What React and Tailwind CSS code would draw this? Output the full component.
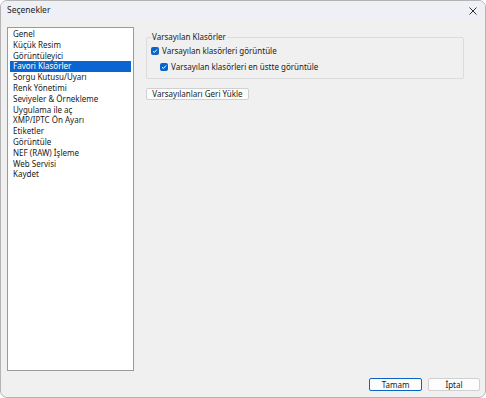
import React from "react";

const items = [
  "Genel",
  "Küçük Resim",
  "Görüntüleyici",
  "Favori Klasörler",
  "Sorgu Kutusu/Uyarı",
  "Renk Yönetimi",
  "Seviyeler & Örnekleme",
  "Uygulama ile aç",
  "XMP/IPTC Ön Ayarı",
  "Etiketler",
  "Görüntüle",
  "NEF (RAW) İşleme",
  "Web Servisi",
  "Kaydet",
];

function Check() {
  return (
    <span className="flex w-[8px] h-[8px] rounded-[2px] bg-[#0a64c8] items-center justify-center shrink-0">
      <svg width="6" height="6" viewBox="0 0 6 6">
        <path d="M1 3.2 L2.4 4.5 L5 1.5" fill="none" stroke="#fff" strokeWidth="1" />
      </svg>
    </span>
  );
}

export default function App() {
  return (
    <div
      className="w-[486px] h-[398px] bg-[#f0f0f0] border border-[#b4b4b4] rounded-[7px] overflow-hidden flex flex-col text-[8px] text-[#1a1a1a]"
      style={{ fontFamily: '"Segoe UI", "Noto Sans", sans-serif' }}
    >
      {/* title bar */}
      <div className="h-[19px] bg-[#eff0f6] flex items-center justify-between pl-[6px] pr-[6px] shrink-0">
        <span className="text-[8.5px]">Seçenekler</span>
        <svg width="10" height="10" viewBox="0 0 10 10" className="mr-[1px]">
          <path d="M1.5 1.5 L8.5 8.5 M8.5 1.5 L1.5 8.5" stroke="#333" strokeWidth="1" />
        </svg>
      </div>

      <div className="flex-1 flex flex-col pt-[7px] pl-[6px] pr-[5px]">
        <div className="flex gap-[12px]">
          {/* list */}
          <div className="w-[127px] h-[344px] bg-white border border-[#9a9a9a] pt-[1px] px-[2px] flex flex-col">
            {items.map((t, i) => (
              <div
                key={t}
                className={`h-[10.8px] leading-[10.8px] pl-[3px] whitespace-nowrap ${
                  i === 3 ? "bg-[#0a64d2] text-white" : ""
                }`}
              >
                {t}
              </div>
            ))}
          </div>

          {/* right panel */}
          <div className="flex flex-col pt-[10px] w-[318px]">
            <div className="relative border border-[#dcdcdc] rounded-[2px] h-[42px] pt-[7px] pl-[4px] flex flex-col gap-[4px]">
              <span className="absolute -top-[6px] left-[4px] bg-[#f0f0f0] px-[1px] leading-[10px]">
                Varsayılan Klasörler
              </span>
              <div className="flex items-center gap-[3px]">
                <Check />
                <span>Varsayılan klasörleri görüntüle</span>
              </div>
              <div className="flex items-center gap-[3px] pl-[9px]">
                <Check />
                <span>Varsayılan klasörleri en üstte görüntüle</span>
              </div>
            </div>
            <button className="mt-[9px] w-[103px] h-[12px] bg-[#fdfdfd] border border-[#d0d0d0] rounded-[2px] text-[8px] leading-[10px] flex items-center justify-center">
              Varsayılanları Geri Yükle
            </button>
          </div>
        </div>

        {/* bottom buttons */}
        <div className="flex justify-end gap-[6px] mt-[7px]">
          <button className="w-[53px] h-[13px] bg-[#fdfdfd] border border-[#0a64c8] rounded-[2px] text-[8px] leading-[10px] flex items-center justify-center">
            Tamam
          </button>
          <button className="w-[52px] h-[13px] bg-[#fdfdfd] border border-[#d0d0d0] rounded-[2px] text-[8px] leading-[10px] flex items-center justify-center">
            İptal
          </button>
        </div>
      </div>
    </div>
  );
}
